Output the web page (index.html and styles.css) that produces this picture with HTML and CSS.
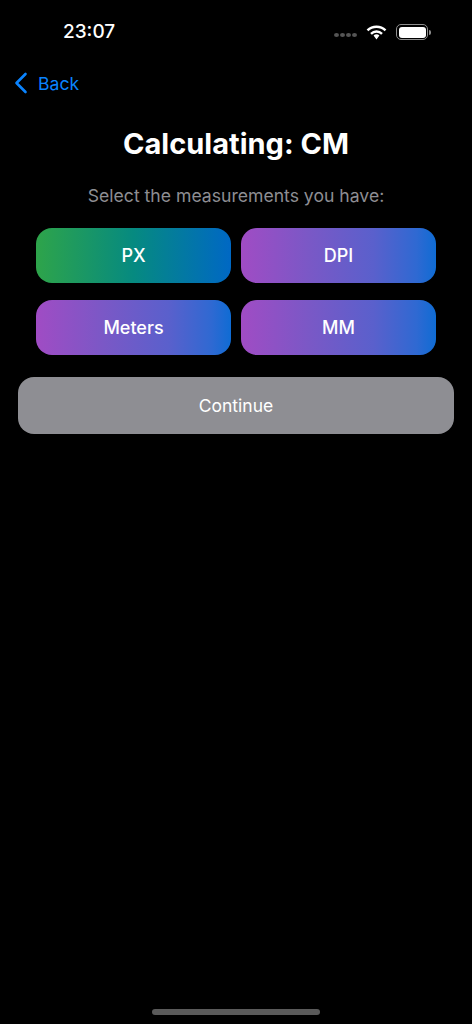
FILE: index.html

```html
<!DOCTYPE html>
<html lang="en">
<head>
  <meta charset="UTF-8">
  <title>Calculating: CM</title>
  <link rel="stylesheet" href="styles.css">
</head>
<body>

<div class="screen">
  <div class="status-bar">
    <span class="time">23:07</span>
    <div class="status-icons">
      <div class="signal"><i></i><i></i><i></i><i></i></div>
      <svg class="wifi" width="21" height="15" viewBox="0 0 21 15">
        <path d="M1.500 5.300a13 13 0 0 1 18 0" fill="none" stroke="#fff" stroke-width="2.500"/>
        <path d="M5 8.800a8 8 0 0 1 11 0" fill="none" stroke="#fff" stroke-width="2.500"/>
        <path d="M10.500 9.300c-1.100 0-2.100.4-2.900 1.100l2.900 4 2.900-4a4.300 4.300 0 0 0-2.900-1.100z" fill="#fff"/>
      </svg>
      <div class="battery"><div class="battery-fill"></div></div>
      <div class="battery-cap"></div>
    </div>
  </div>

  <div class="nav">
    <svg class="chevron" width="14" height="22" viewBox="0 0 14 22">
      <path d="M11.500 2 2.500 11l9 9" fill="none" stroke="#0a84ff" stroke-width="2.600" stroke-linecap="round" stroke-linejoin="round"/>
    </svg>
    <span class="back">Back</span>
  </div>

  <h1>Calculating: CM</h1>
  <p class="hint">Select the measurements you have:</p>

  <div class="options">
    <button class="option green">PX</button>
    <button class="option">DPI</button>
    <button class="option">Meters</button>
    <button class="option">MM</button>
  </div>

  <button class="continue">Continue</button>

  <div class="home-bar"></div>
</div>

</body>
</html>
```

FILE: styles.css

```css
* {
  box-sizing: border-box;
}
body {
  background: #000;
  color: white;
  font-family: Inter, 'Liberation Sans', sans-serif;
  margin: 0;
  padding: 0;
}
.screen {
  width: 472px;
  height: 1024px;
  display: flex;
  flex-direction: column;
  overflow: hidden;
}
.status-bar {
  height: 64px;
  padding: 20px 41px 0 63px;
  display: flex;
  justify-content: space-between;
  align-items: flex-start;
}
.time {
  font-size: 19px;
  font-weight: 500;
  line-height: 24px;
}
.status-icons {
  display: flex;
  align-items: center;
  height: 24px;
}
.signal {
  display: flex;
  gap: 1px;
  margin-right: 9px;
  margin-top: 6px;
}
.signal i {
  width: 5px;
  height: 4px;
  border-radius: 50%;
  background: #555;
}
.wifi {
  margin-right: 9px;
}
.battery {
  width: 32px;
  height: 16px;
  border: 1px solid #8e8e8e;
  border-radius: 5px;
  padding: 1.500px;
}
.battery-fill {
  height: 100%;
  background: #fff;
  border-radius: 3px;
}
.battery-cap {
  width: 2px;
  height: 5px;
  margin-left: 1px;
  background: #8e8e8e;
  border-radius: 0 2px 2px 0;
}
.nav {
  height: 38px;
  padding-left: 14px;
  display: flex;
  align-items: center;
  gap: 10px;
}
.back {
  color: #0a84ff;
  font-size: 17.600px;
}
h1 {
  margin: 0;
  padding-top: 24px;
  font-size: 29px;
  line-height: 36px;
  font-weight: 700;
  text-align: center;
}
.hint {
  margin: 22px 0 0;
  font-size: 17.600px;
  line-height: 24px;
  color: #8e8e93;
  text-align: center;
}
.options {
  margin: 20px 36px 0;
  display: grid;
  grid-template-columns: 195px 195px;
  grid-auto-rows: 55px;
  column-gap: 10px;
  row-gap: 17px;
}
.option {
  border: none;
  border-radius: 16px;
  color: white;
  font-family: inherit;
  font-size: 18px;
  font-weight: 500;
  background: linear-gradient(90deg, #a04cc4, #7a58c6 35%, #5a60cc 68%, #2f69d2 90%, #0f6cd4);
}
.option.green {
  background: linear-gradient(90deg, #2ea44a, #068a80 50%, #0068c4);
}
.continue {
  margin: 22px 18px 0;
  height: 57px;
  border: none;
  border-radius: 16px;
  background: #8e8e93;
  color: white;
  font-family: inherit;
  font-size: 17.500px;
}
.home-bar {
  width: 168px;
  height: 6px;
  margin: auto auto 9px;
  border-radius: 3px;
  background: #5a5a5a;
}
```
